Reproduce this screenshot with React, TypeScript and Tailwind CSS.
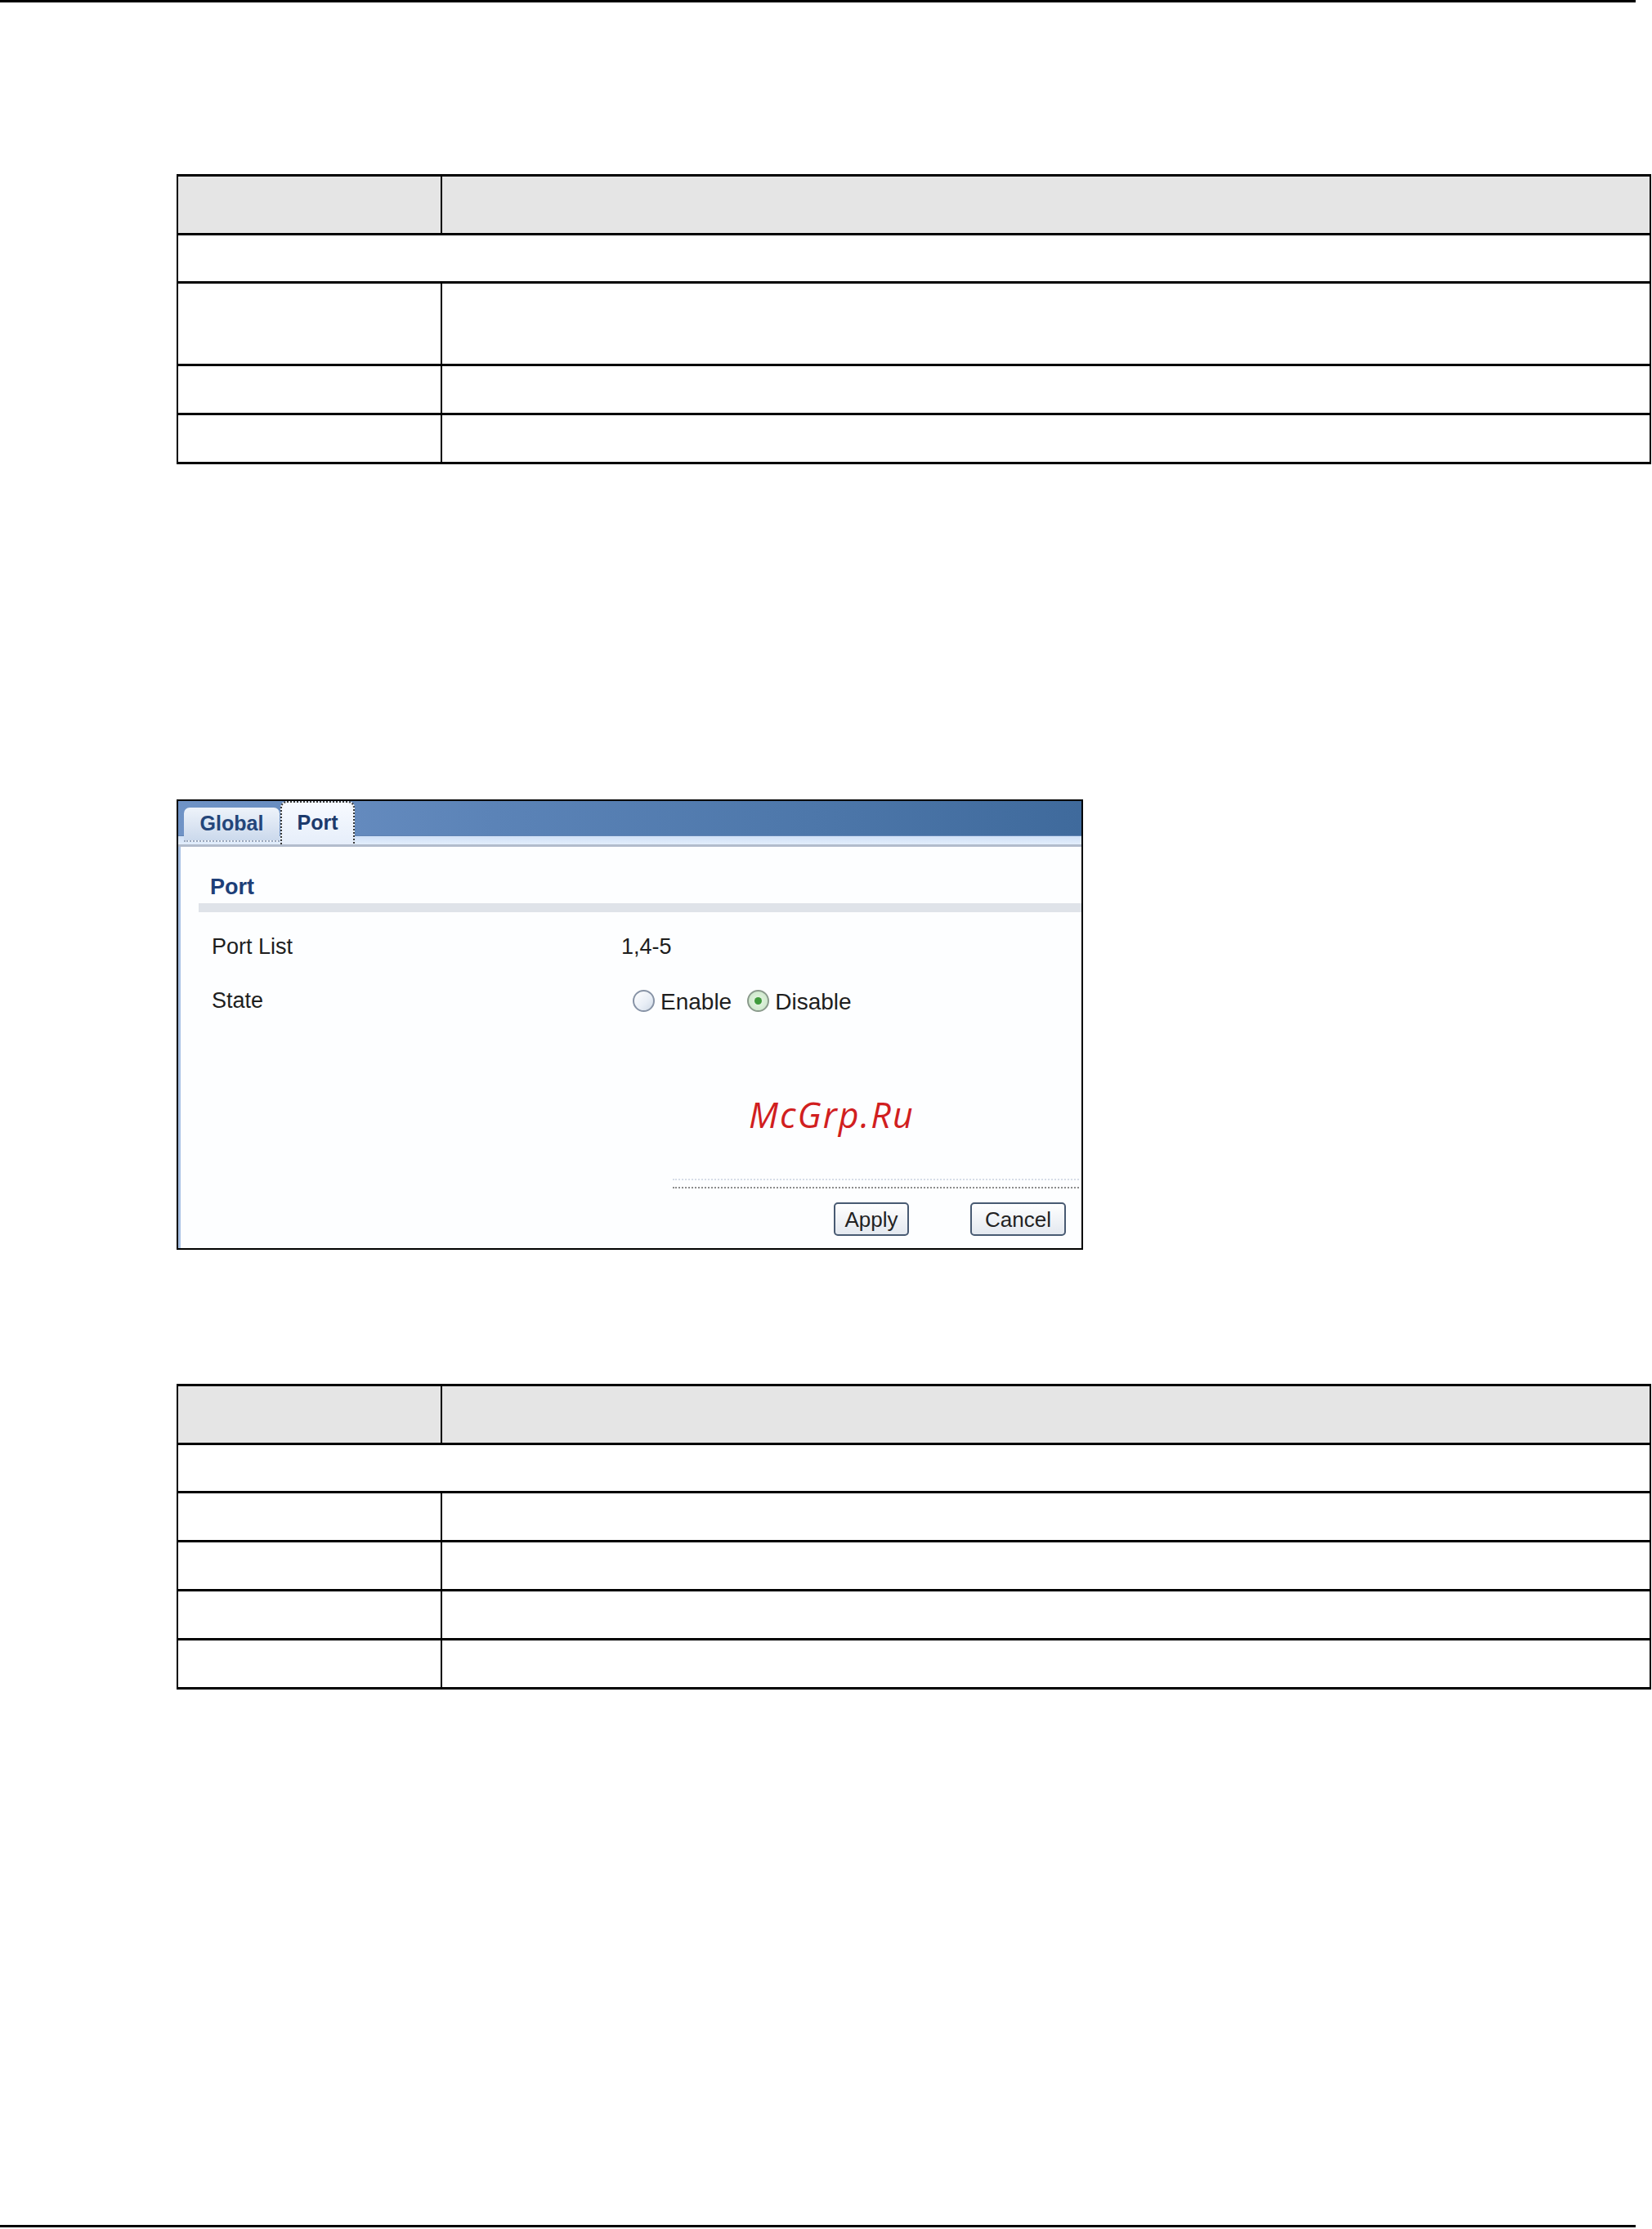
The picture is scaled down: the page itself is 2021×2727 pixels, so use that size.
import React from "react";

function DocTable({ rows }: { rows: number[] }) {
  return (
    <div className="ml-[216px] w-[1804px] border-x-2 border-y-[3px] border-black">
      <div className="grid h-[69px] grid-cols-[323px_1fr] bg-[#e5e5e5]">
        <div className="border-r-2 border-black" />
        <div />
      </div>
      <div className="h-[59px] border-t-[3px] border-black" />
      {rows.map((h, i) => (
        <div
          key={i}
          className="grid grid-cols-[323px_1fr] border-t-[3px] border-black"
          style={{ height: h + 3 }}
        >
          <div className="border-r-2 border-black" />
          <div />
        </div>
      ))}
    </div>
  );
}

function Radio({ checked }: { checked?: boolean }) {
  return checked ? (
    <span className="flex h-[27px] w-[27px] items-center justify-center rounded-full border-2 border-[#8a9a8c] bg-[radial-gradient(circle,#e9f7e6_0%,#cfe9cd_70%,#b9d7bb_100%)]">
      <span className="h-[9px] w-[9px] rounded-full bg-[#3f9b3c]" />
    </span>
  ) : (
    <span className="block h-[27px] w-[27px] rounded-full border-2 border-[#8793a6] bg-[linear-gradient(135deg,#ffffff_0%,#e8eef6_60%,#cfd9e6_100%)]" />
  );
}

function Panel() {
  return (
    <div className="ml-[216px] flex h-[551px] w-[1109px] flex-col border-2 border-black bg-white font-['Liberation_Sans',Arial,sans-serif]">
      {/* tab bar */}
      <div className="relative h-[56px] shrink-0">
        <div className="h-[42px] bg-[linear-gradient(to_right,#6f93c6_0%,#5b83b7_35%,#4d77aa_70%,#3f6a9c_100%)]" />
        <div className="h-[1px] bg-[#5f82b2]" />
        <div className="h-[10px] bg-[linear-gradient(to_bottom,#cfe0f7,#e3eefc)]" />
        <div className="h-[3px] bg-[#b2bccc]" />
        <div className="absolute left-[7px] top-[8px] flex h-[42px] w-[117px] items-start justify-center rounded-t-[7px] border-b-2 border-dotted border-[#9aa8bc] bg-[linear-gradient(to_bottom,#eef3fa,#cbd9ec)] pt-[7px]">
          <span className="text-[25px] font-bold leading-none text-[#23457a]">Global</span>
        </div>
        <div className="absolute left-[125px] top-0 flex h-[53px] w-[91px] items-start justify-center rounded-t-[8px] border-x-2 border-t-2 border-dotted border-[#3a3a3a] bg-[linear-gradient(to_bottom,#f7faff,#e6eefa)] pt-[12px]">
          <span className="text-[25px] font-bold leading-none text-[#1c3a6c]">Port</span>
        </div>
      </div>

      {/* body */}
      <div className="relative flex flex-1 flex-col border-l-[3px] border-[#a7c0e4] bg-[#fdfeff]">
        <div className="ml-[36px] mt-[33px] text-[27px] font-bold leading-[32px] text-[#1d3f78]">Port</div>
        <div className="ml-[22px] mt-[4px] h-[11px] bg-[#dfe3e9]" />

        <div className="mt-[26px] flex h-[32px] items-center text-[27px] leading-[32px] text-[#1e1e1e]">
          <span className="ml-[38px] w-[501px]">Port List</span>
          <span>1,4-5</span>
        </div>

        <div className="mt-[34px] flex h-[32px] items-center text-[27px] leading-[32px] text-[#1e1e1e]">
          <span className="ml-[38px] w-[515px]">State</span>
          <span className="flex items-center text-[28px]">
            <Radio />
            <span className="ml-[7px] mt-[4px]">Enable</span>
            <span className="ml-[19px]">
              <Radio checked />
            </span>
            <span className="ml-[7px] mt-[4px]">Disable</span>
          </span>
        </div>

        <div className="ml-[602px] mr-[3px] mt-[202px] border-t-2 border-dotted border-[#d6dde8]" />
        <div className="ml-[602px] mr-[3px] mt-[8px] border-t-2 border-dotted border-[#8c8c8c]" />

        <div className="mt-[17px] flex">
          <button className="ml-[799px] flex h-[41px] w-[92px] items-center justify-center rounded-[5px] border-2 border-[#485a72] bg-[linear-gradient(to_bottom,#ffffff,#e3e8ef)] text-[26px] leading-none text-[#222]">
            Apply
          </button>
          <button className="ml-[75px] flex h-[41px] w-[117px] items-center justify-center rounded-[5px] border-2 border-[#485a72] bg-[linear-gradient(to_bottom,#ffffff,#e3e8ef)] text-[26px] leading-none text-[#222]">
            Cancel
          </button>
        </div>

        <div className="pointer-events-none absolute left-[695px] top-[306px] font-['Open_Sans',sans-serif] text-[43px] italic leading-[43px] tracking-[2px] text-[#d11f1f]">
          McGrp.Ru
        </div>
      </div>
    </div>
  );
}

export default function App() {
  return (
    <div className="relative flex h-[2727px] w-[2021px] flex-col bg-white">
      <div className="h-[3px] w-[2001px] bg-black" />
      <div className="mt-[210px]">
        <DocTable rows={[98, 57, 57]} />
      </div>
      <div className="mt-[410px]">
        <Panel />
      </div>
      <div className="mt-[164px]">
        <DocTable rows={[57, 57, 57, 57]} />
      </div>
      <div className="mt-auto mb-[2px] h-[3px] w-[2001px] bg-black" />
    </div>
  );
}
